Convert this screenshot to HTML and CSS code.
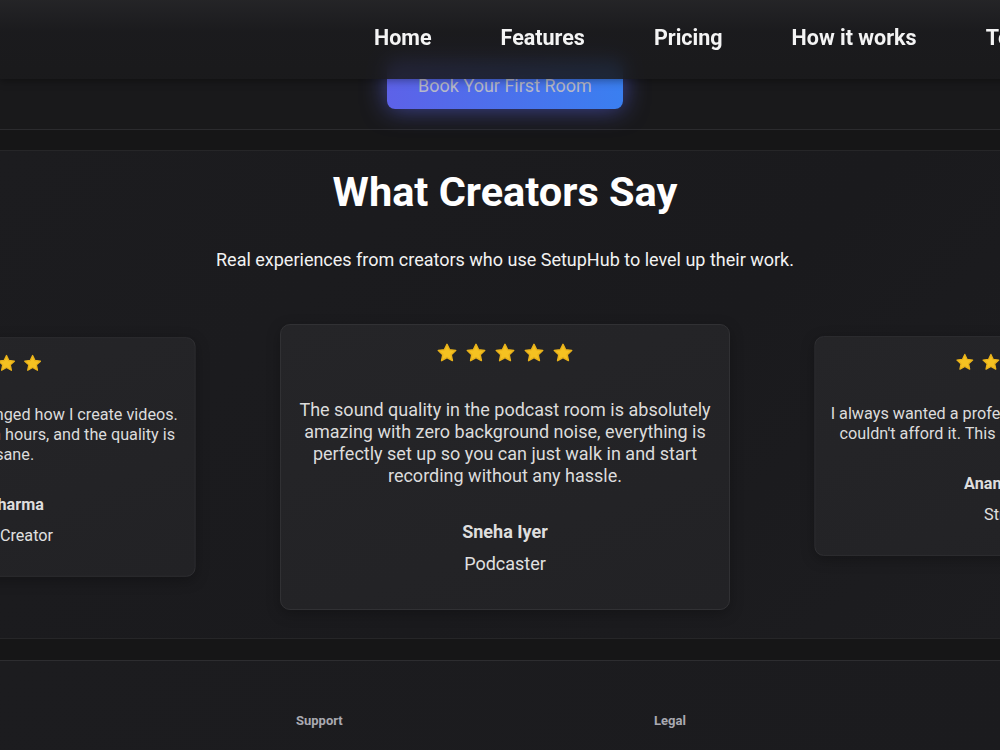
FILE: index.html
```html
<!doctype html>
<html lang="en">
 <head>
  <title>SetupHub - Testimonials</title>
  <link rel="stylesheet" href="styles.css">
 </head>
 <body>
 <header class="topbar">
   <nav class="nav">
     <a href="#">Home</a>
     <a href="#">Features</a>
     <a href="#">Pricing</a>
     <a href="#">How it works</a>
     <a href="#">Testimonials</a>
   </nav>
 </header>

 <div class="page">
   <section class="cta">
     <a class="cta-btn" href="#">Book Your First Room</a>
   </section>

   <section class="reviews">
     <h2>What Creators Say</h2>
     <p class="reviews-sub">Real experiences from creators who use SetupHub to level up their work.</p>

     <div class="track">
       <div class="card side">
         <div class="stars">
           <svg viewBox="0 0 24 24"><path d="M12 2.5l2.9 6 6.6.8-4.9 4.5 1.3 6.5L12 17l-5.9 3.3 1.3-6.5-4.9-4.5 6.6-.8z"/></svg>
           <svg viewBox="0 0 24 24"><path d="M12 2.5l2.9 6 6.6.8-4.9 4.5 1.3 6.5L12 17l-5.9 3.3 1.3-6.5-4.9-4.5 6.6-.8z"/></svg>
           <svg viewBox="0 0 24 24"><path d="M12 2.5l2.9 6 6.6.8-4.9 4.5 1.3 6.5L12 17l-5.9 3.3 1.3-6.5-4.9-4.5 6.6-.8z"/></svg>
           <svg viewBox="0 0 24 24"><path d="M12 2.5l2.9 6 6.6.8-4.9 4.5 1.3 6.5L12 17l-5.9 3.3 1.3-6.5-4.9-4.5 6.6-.8z"/></svg>
         </div>
         <p class="quote">This space has totally changed how I create videos. Now I can book a studio in hours, and the quality is just insane.</p>
         <div class="who">Rahul Sharma</div>
         <div class="role">YouTube Creator</div>
       </div>

       <div class="card">
         <div class="stars">
           <svg viewBox="0 0 24 24"><path d="M12 2.5l2.9 6 6.6.8-4.9 4.5 1.3 6.5L12 17l-5.9 3.3 1.3-6.5-4.9-4.5 6.6-.8z"/></svg>
           <svg viewBox="0 0 24 24"><path d="M12 2.5l2.9 6 6.6.8-4.9 4.5 1.3 6.5L12 17l-5.9 3.3 1.3-6.5-4.9-4.5 6.6-.8z"/></svg>
           <svg viewBox="0 0 24 24"><path d="M12 2.5l2.9 6 6.6.8-4.9 4.5 1.3 6.5L12 17l-5.9 3.3 1.3-6.5-4.9-4.5 6.6-.8z"/></svg>
           <svg viewBox="0 0 24 24"><path d="M12 2.5l2.9 6 6.6.8-4.9 4.5 1.3 6.5L12 17l-5.9 3.3 1.3-6.5-4.9-4.5 6.6-.8z"/></svg>
           <svg viewBox="0 0 24 24"><path d="M12 2.5l2.9 6 6.6.8-4.9 4.5 1.3 6.5L12 17l-5.9 3.3 1.3-6.5-4.9-4.5 6.6-.8z"/></svg>
         </div>
         <p class="quote">The sound quality in the podcast room is absolutely amazing with zero background noise, everything is perfectly set up so you can just walk in and start recording without any hassle.</p>
         <div class="who">Sneha Iyer</div>
         <div class="role">Podcaster</div>
       </div>

       <div class="card side">
         <div class="stars">
           <svg viewBox="0 0 24 24"><path d="M12 2.5l2.9 6 6.6.8-4.9 4.5 1.3 6.5L12 17l-5.9 3.3 1.3-6.5-4.9-4.5 6.6-.8z"/></svg>
           <svg viewBox="0 0 24 24"><path d="M12 2.5l2.9 6 6.6.8-4.9 4.5 1.3 6.5L12 17l-5.9 3.3 1.3-6.5-4.9-4.5 6.6-.8z"/></svg>
           <svg viewBox="0 0 24 24"><path d="M12 2.5l2.9 6 6.6.8-4.9 4.5 1.3 6.5L12 17l-5.9 3.3 1.3-6.5-4.9-4.5 6.6-.8z"/></svg>
           <svg viewBox="0 0 24 24"><path d="M12 2.5l2.9 6 6.6.8-4.9 4.5 1.3 6.5L12 17l-5.9 3.3 1.3-6.5-4.9-4.5 6.6-.8z"/></svg>
           <svg viewBox="0 0 24 24"><path d="M12 2.5l2.9 6 6.6.8-4.9 4.5 1.3 6.5L12 17l-5.9 3.3 1.3-6.5-4.9-4.5 6.6-.8z"/></svg>
         </div>
         <p class="quote">I always wanted a professional streaming setup, but couldn't afford it. This made it all possible for me.</p>
         <div class="who">Ananya Verma</div>
         <div class="role">Streamer</div>
       </div>
     </div>
   </section>

   <footer class="foot">
     <div class="foot-cols">
       <h4>Support</h4>
       <h4>Legal</h4>
     </div>
   </footer>
 </div>
 </body>
</html>
```

FILE: styles.css
```css
html, body {
  margin: 0;
  overflow: hidden;
}
body {
  background: #161617;
  font-family: Roboto, "Liberation Sans", sans-serif;
  color: #fff;
  height: 750px;
}

.topbar {
  position: fixed;
  top: 0;
  left: 0;
  width: 1010px;
  height: 79px;
  z-index: 10;
  background: linear-gradient(180deg, rgba(38,38,41,0.88) 0%, rgba(27,27,30,0.88) 40%, rgba(26,26,28,0.88) 100%);
  backdrop-filter: blur(8px);
  box-shadow: 0 2px 8px rgba(0,0,0,0.35);
}
.nav {
  display: flex;
  gap: 69px;
  padding-left: 374px;
  height: 79px;
  align-items: center;
  white-space: nowrap;
}
.nav a {
  color: #f4f4f4;
  text-decoration: none;
  font-size: 21.5px;
  font-weight: 700;
  line-height: 26px;
  padding-bottom: 3px;
}

.page {
  width: 1010px;
}

.cta {
  height: 130px;
  background: #19191b;
  border-bottom: 1px solid #2b2b2e;
  display: flex;
  justify-content: center;
  align-items: flex-end;
  box-sizing: border-box;
  padding-bottom: 20px;
}
.cta-btn {
  display: block;
  width: 236px;
  height: 48px;
  line-height: 50px;
  text-align: center;
  border-radius: 8px;
  background: linear-gradient(90deg, #5d62e8, #3a7ff0);
  color: #b7b9c9;
  font-size: 18px;
  text-decoration: none;
  box-shadow: 0 0 24px rgba(90,100,240,0.6);
}

.reviews {
  margin-top: 20px;
  border-top: 1px solid #262628;
  border-bottom: 1px solid #262628;
  background: linear-gradient(135deg, #1c1c1f, #1a1a1d 60%, #1d1d20);
  text-align: center;
  padding: 17px 0 28px;
}
.reviews h2 {
  margin: 0;
  font-size: 41.5px;
  line-height: 48px;
  font-weight: 700;
  color: #fff;
}
.reviews-sub {
  margin: 32px 0 0;
  font-size: 18px;
  line-height: 24px;
  color: #f2f2f2;
}

.track {
  margin-top: 52px;
  display: flex;
  justify-content: center;
  align-items: flex-start;
  gap: 62px;
}
.card {
  flex: 0 0 450px;
  box-sizing: border-box;
  background: linear-gradient(160deg, #252528, #222225);
  border: 1px solid #313134;
  border-radius: 10px;
  padding: 16px 16px 33px;
  box-shadow: 0 4px 14px rgba(0,0,0,0.25);
}
.card.side {
  transform: scale(0.9);
}
.card.side .role {
  margin-top: 11px;
}
.stars {
  display: flex;
  justify-content: center;
  gap: 7px;
  height: 24px;
  align-items: center;
}
.stars svg {
  width: 22px;
  height: 22px;
  fill: #f5c221;
  stroke: #e9b21a;
  stroke-width: 1.6;
  stroke-linejoin: round;
}
.quote {
  margin: 34px 0 0;
  font-size: 18px;
  line-height: 22px;
  color: #dcdcdc;
}
.who {
  margin-top: 34px;
  font-size: 18px;
  line-height: 22px;
  font-weight: 700;
  color: #dedede;
}
.role {
  margin-top: 9px;
  font-size: 18px;
  line-height: 24px;
  color: #e0e0e0;
}

.foot {
  margin-top: 21px;
  border-top: 1px solid #2d2d30;
  background: linear-gradient(135deg, #1c1c1f, #1b1b1e);
  height: 100px;
}
.foot-cols {
  display: grid;
  grid-template-columns: 358px 358px;
  padding: 52px 0 0 296px;
}
.foot-cols h4 {
  margin: 0;
  font-size: 13px;
  line-height: 16px;
  font-weight: 700;
  color: #a9a9b1;
}
```
